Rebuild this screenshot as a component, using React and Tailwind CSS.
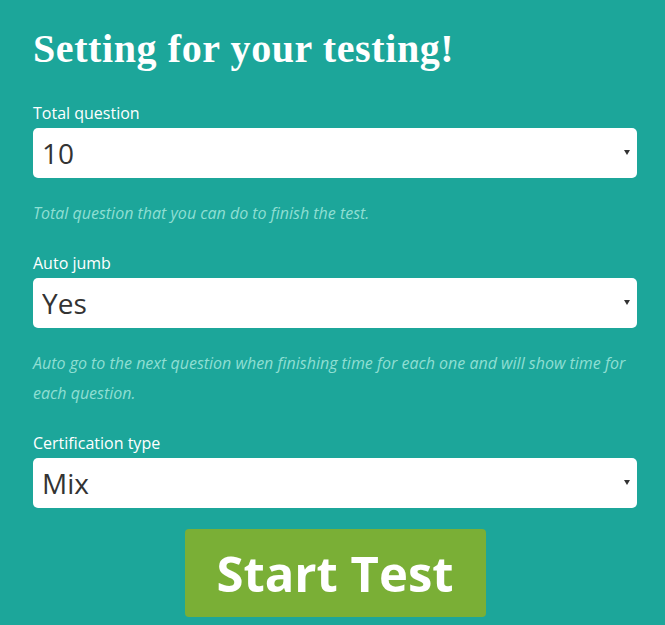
import React from "react";

function Field({ label, value, options, help }) {
  return (
    <div>
      <label className="block text-[16px] leading-[22px] text-white mb-[4px]">{label}</label>
      <div className="relative">
        <select
          defaultValue={value}
          className="block w-full h-[50px] appearance-none rounded-[5px] bg-white pl-[9px] text-[28px] text-[#333] outline-none"
          style={{ fontFamily: '"Open Sans", sans-serif' }}
        >
          {options.map((o) => (
            <option key={o}>{o}</option>
          ))}
        </select>
        <svg className="pointer-events-none absolute right-[7px] top-[22px]" width="6" height="5" viewBox="0 0 6 5">
          <path d="M0 0 H6 L3 5 Z" fill="#333" />
        </svg>
      </div>
      {help && (
        <p className="mt-[20px] text-[16px] leading-[30px] italic font-normal text-[#8fdfd3]">{help}</p>
      )}
    </div>
  );
}

export default function App() {
  return (
    <div
      className="min-h-[625px] w-full bg-[#1ca69a] pl-[33px] pr-[28px] pt-[24px] pb-[8px]"
      style={{ fontFamily: '"Open Sans", sans-serif' }}
    >
      <h1
        className="text-[40px] leading-[50px] font-bold text-white mb-[28px] tracking-[0.6px]"
        style={{ fontFamily: '"Liberation Serif", serif' }}
      >
        Setting for your testing!
      </h1>
      <div className="flex flex-col gap-[24px]">
        <Field
          label="Total question"
          value="10"
          options={["10", "20", "30"]}
          help="Total question that you can do to finish the test."
        />
        <Field
          label="Auto jumb"
          value="Yes"
          options={["Yes", "No"]}
          help="Auto go to the next question when finishing time for each one and will show time for each question."
        />
        <Field label="Certification type" value="Mix" options={["Mix"]} />
      </div>
      <div className="flex justify-center mt-[21px]">
        <button className="w-[301px] h-[88px] rounded-[4px] bg-[#7aaf36] text-white text-[49px] font-bold leading-none">
          Start Test
        </button>
      </div>
    </div>
  );
}
